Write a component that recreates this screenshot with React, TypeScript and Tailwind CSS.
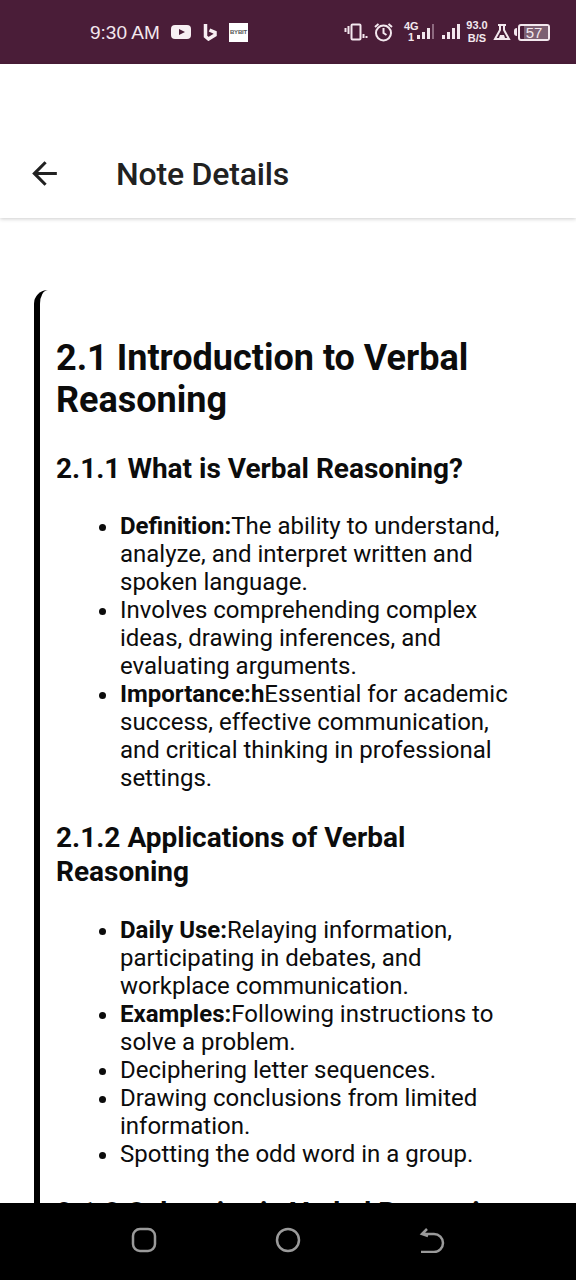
import React from "react";

const Li = ({ b, children }: { b?: string; children: React.ReactNode }) => (
  <li className="list-disc">
    {b && <strong className="font-bold">{b}</strong>}
    {children}
  </li>
);

export default function App() {
  return (
    <div className="w-[576px] h-[1280px] flex flex-col bg-white overflow-hidden font-['Roboto',sans-serif] text-[#0c0c0c]">
      <div className="h-16 shrink-0 bg-[#4a1d38] text-[#f3e8ee] flex items-center relative">
        <span className="ml-[90px] text-[19px] font-['Liberation_Sans',sans-serif] leading-none w-[71px]">9:30 AM</span>
        <svg className="ml-[10px]" width="20" height="16" viewBox="0 0 20 16"><rect x="0" y="1" width="20" height="14" rx="4" fill="#f7eff3"/><path d="M8 5l6 3-6 3z" fill="#4a1d38"/></svg>
        <svg className="ml-[12px]" width="14" height="18" viewBox="0 0 14 18"><path d="M2.500 1v12.500l3 2.500 6.500-4V9.500L6.500 7" fill="none" stroke="#f7eff3" strokeWidth="3.500"/></svg>
        <div className="ml-[12px] w-[19px] h-[19px] bg-white flex items-center justify-center text-[6px] tracking-[-0.2px] font-bold text-[#555] font-['Liberation_Sans',sans-serif]">BYBIT</div>
        <div className="ml-auto mr-[26px] flex items-center">
          <svg width="24" height="20" viewBox="0 0 24 20" fill="none" stroke="#f3e8ee"><rect x="7.500" y="2.500" width="9" height="15" rx="1" strokeWidth="2"/><path d="M1.500 6v4M4.500 4v8M19.500 12v4M22.500 14v2" strokeWidth="2"/></svg>
          <svg className="ml-[5px]" width="21" height="20" viewBox="0 0 21 20" fill="none" stroke="#f3e8ee" strokeWidth="2"><circle cx="10.500" cy="11" r="7.500"/><path d="M10.500 6v5l3 2M2 5l3.500-3M19 5l-3.500-3"/></svg>
          <div className="ml-[10px] w-[14px] text-[11px] leading-[11px] font-bold text-center font-['Liberation_Sans',sans-serif]">4G<br/>1</div>
          <svg className="ml-[-2px]" width="20" height="18" viewBox="0 0 20 18"><rect x="1" y="12" width="3" height="4" fill="#f3e8ee"/><rect x="6" y="9" width="3" height="7" fill="#f3e8ee"/><rect x="11" y="5" width="3" height="11" fill="#f3e8ee"/><rect x="16" y="1" width="2" height="15" fill="#8d6a7f"/></svg>
          <svg className="ml-[5px]" width="20" height="18" viewBox="0 0 20 18" fill="#f3e8ee"><rect x="1" y="12" width="3" height="4"/><rect x="6" y="9" width="3" height="7"/><rect x="11" y="5" width="3" height="11"/><rect x="16" y="1" width="3" height="15"/></svg>
          <div className="ml-[5px] w-[22px] text-[11px] leading-[13px] font-bold text-center font-['Liberation_Sans',sans-serif]">93.0<br/>B/S</div>
          <svg className="ml-[5px]" width="18" height="18" viewBox="0 0 18 18" fill="none" stroke="#f3e8ee" strokeWidth="2"><path d="M5 2h8M7 2v5L2 16h14l-5-9V2"/><path d="M7 12h4l1 3H6z" fill="#f3e8ee" stroke="none"/></svg>
          <div className="ml-[3px] w-[3px] h-[8px] bg-[#f3e8ee] rounded-l-sm" />
          <div className="ml-[1px] w-[32px] h-[17px] border-2 border-[#f3e8ee] rounded-[3px] overflow-hidden relative flex items-center justify-center text-[15px] leading-none">
            <div className="absolute right-0 top-0 bottom-0 w-[24px] bg-[#7c5f72]" />
            <span className="relative font-['Liberation_Sans',sans-serif]">57</span>
          </div>
        </div>
      </div>

      <div className="h-[154px] shrink-0 bg-white flex items-end pb-[25px] shadow-[0_1px_4px_rgba(0,0,0,0.2)] relative z-10 text-[#212121]">
        <svg className="ml-[26px] mb-[1px]" width="37" height="37" viewBox="0 0 24 24" fill="currentColor"><path d="M20 11H7.830l5.590-5.590L12 4l-8 8 8 8 1.410-1.410L7.830 13H20v-2z" /></svg>
        <h1 className="ml-[53px] text-[32px] leading-[38px] font-medium tracking-[-0.2px]">Note Details</h1>
      </div>

      <main className="flex-1 min-h-0 overflow-hidden px-[34px] pt-[72px]">
        <div className="border-l-[6px] border-black rounded-tl-[14px] pl-[16px] pr-[16px] pt-[47px]">
          <h2 className="text-[36px] leading-[42px] font-bold">2.1 Introduction to Verbal Reasoning</h2>
          <h3 className="mt-[31px] text-[28px] leading-[34px] font-bold">2.1.1 What is Verbal Reasoning?</h3>
          <ul className="mt-[26px] pl-[64px] text-[24px] leading-[28px]">
            <Li b="Definition:">The ability to understand, analyze, and interpret written and spoken language.</Li>
            <Li>Involves comprehending complex ideas, drawing inferences, and evaluating arguments.</Li>
            <Li b="Importance:h">Essential for academic success, effective communication, and critical thinking in professional settings.</Li>
          </ul>
          <h3 className="mt-[29px] text-[28px] leading-[34px] font-bold">2.1.2 Applications of Verbal Reasoning</h3>
          <ul className="mt-[27px] pl-[64px] text-[24px] leading-[28px]">
            <Li b="Daily Use:">Relaying information, participating in debates, and workplace communication.</Li>
            <Li b="Examples:">Following instructions to solve a problem.</Li>
            <Li>Deciphering letter sequences.</Li>
            <Li>Drawing conclusions from limited information.</Li>
            <Li>Spotting the odd word in a group.</Li>
          </ul>
          <h3 className="mt-[28px] text-[28px] leading-[34px] font-bold">2.1.3 Subtopics in Verbal Reasoning</h3>
          <div className="h-[60px]" />
        </div>
      </main>

      <div className="h-[77px] shrink-0 bg-black flex items-center relative z-10 pb-[3px]">
        <svg className="ml-[131px]" width="26" height="26" viewBox="0 0 26 26" fill="none" stroke="#9a9a9a" strokeWidth="2.500"><rect x="2" y="2" width="22" height="22" rx="7"/></svg>
        <svg className="ml-[118px]" width="26" height="26" viewBox="0 0 26 26" fill="none" stroke="#9a9a9a" strokeWidth="2.500"><circle cx="13" cy="13" r="11"/></svg>
        <svg className="ml-[118px]" width="26" height="26" viewBox="0 0 26 26" fill="none" stroke="#9a9a9a" strokeWidth="2.500"><path d="M2 25h13a9 9 0 0 0 0-18H3M8 2L3 7l6 2"/></svg>
      </div>
    </div>
  );
}
